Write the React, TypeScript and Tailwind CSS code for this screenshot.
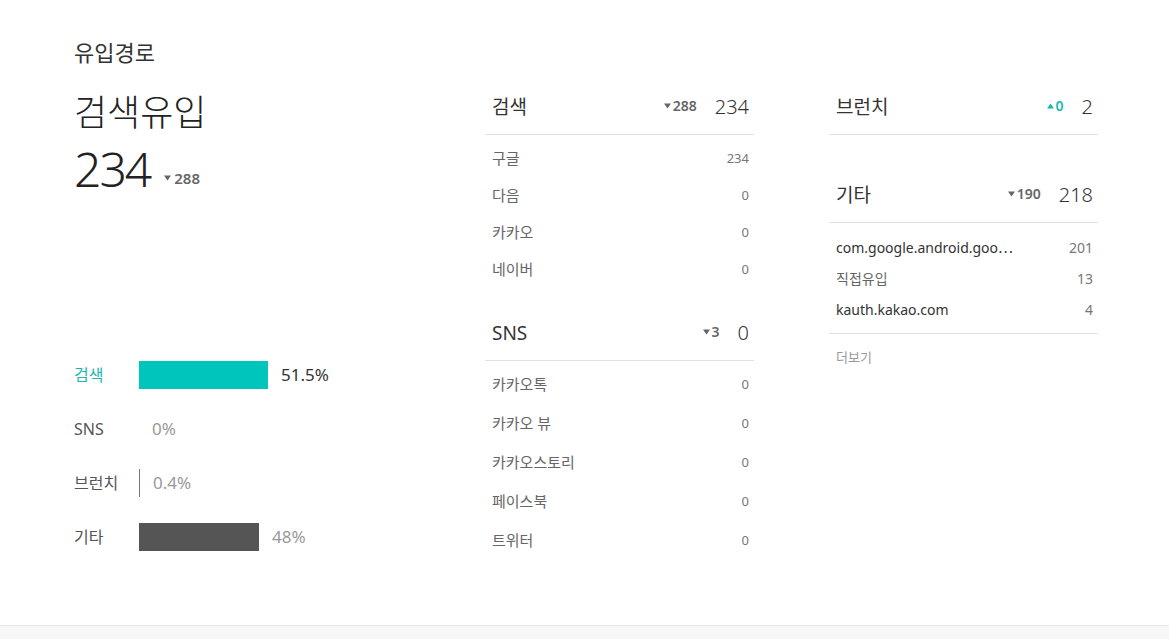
import React from "react";

const font = { fontFamily: '"Noto Sans", "Noto Sans CJK KR", sans-serif' };

function Tri({ up, className }: { up?: boolean; className?: string }) {
  return (
    <svg width="7" height="6" viewBox="0 0 7 6" className={className}>
      {up ? <path d="M3.5 0.5 L7 5.5 L0 5.5 Z" fill="currentColor" /> : <path d="M0 0.5 L7 0.5 L3.5 5.5 Z" fill="currentColor" />}
    </svg>
  );
}

function Header({ title, diff, up, total }: { title: string; diff: string; up?: boolean; total: string }) {
  return (
    <div className="h-[49px] flex items-center pb-[6px] pl-[7px] pr-[5px] border-b border-[#e1e1e1]">
      <span className="text-[19px] text-[#333] flex-1">{title}</span>
      <span className={`flex items-center gap-[2px] text-[14px] font-semibold -mt-[3px] ${up ? "text-[#1cb7ae]" : "text-[#666]"}`}>
        <Tri up={up} />
        {diff}
      </span>
      <span className="text-[20px] text-[#333] ml-[18px] font-light">{total}</span>
    </div>
  );
}

function Row({ label, value, h }: { label: string; value: string; h: string }) {
  return (
    <div className={`flex items-center justify-between pl-[7px] pr-[5px] ${h}`}>
      <span className="text-[15px] text-[#666]">{label}</span>
      <span className="text-[13px] text-[#777]">{value}</span>
    </div>
  );
}

const chart = [
  { label: "검색", pct: "51.5%", w: 129, color: "bg-[#00c5bd]", active: true },
  { label: "SNS", pct: "0%", w: 0, color: "" },
  { label: "브런치", pct: "0.4%", w: 1, color: "bg-[#777]" },
  { label: "기타", pct: "48%", w: 120, color: "bg-[#555]" },
];

export default function App() {
  return (
    <div style={font} className="bg-white">
      <div className="min-h-[626px] border-b border-[#e6e6e6] pt-[37px] pl-[74px]">
        <h2 className="text-[22px] leading-[30px] text-[#333]">유입경로</h2>
        <div className="flex mt-[19px]">
          <div className="w-[411px]">
            <div className="mt-[5px] text-[36px] leading-[44px] text-[#222] font-light">검색유입</div>
            <div className="mt-[6px] flex items-end">
              <span className="text-[48px] leading-[56px] text-[#222] font-light tracking-[-2px]">234</span>
              <span className="ml-[14px] mb-[8px] flex items-center gap-[3px] text-[15px] font-semibold text-[#666]">
                <Tri />
                288
              </span>
            </div>
            <div className="mt-[151px]">
              {chart.map((c) => (
                <div key={c.label} className="h-[54px] flex items-center">
                  <span className={`w-[65px] text-[16px] ${c.active ? "text-[#1cb7ae]" : "text-[#555]"}`}>{c.label}</span>
                  {c.w === 1 ? (
                    <div className="w-px h-[28px] bg-[#777]" />
                  ) : c.w > 0 ? (
                    <div className={`h-[28px] ${c.color}`} style={{ width: c.w }} />
                  ) : null}
                  <span className={`ml-[13px] text-[17px] ${c.active ? "text-[#333]" : "text-[#999]"}`}>{c.pct}</span>
                </div>
              ))}
            </div>
          </div>

          <div className="w-[269px]">
            <Header title="검색" diff="288" total="234" />
            <div className="pt-[5px]">
              {[
                ["구글", "234"],
                ["다음", "0"],
                ["카카오", "0"],
                ["네이버", "0"],
              ].map(([l, v]) => (
                <Row key={l} label={l} value={v} h="h-[37px]" />
              ))}
            </div>
            <div className="mt-[24px]">
              <Header title="SNS" diff="3" total="0" />
            </div>
            <div className="pt-[4px]">
              {[
                ["카카오톡", "0"],
                ["카카오 뷰", "0"],
                ["카카오스토리", "0"],
                ["페이스북", "0"],
                ["트위터", "0"],
              ].map(([l, v]) => (
                <Row key={l} label={l} value={v} h="h-[39px]" />
              ))}
            </div>
          </div>

          <div className="w-[269px] ml-[75px]">
            <Header title="브런치" diff="0" up total="2" />
            <div className="mt-[39px]">
              <Header title="기타" diff="190" total="218" />
            </div>
            <div className="pt-[9px] pb-[8px] border-b border-[#e1e1e1]">
              {[
                ["com.google.android.goo", "201", true, true],
                ["직접유입", "13", false, false],
                ["kauth.kakao.com", "4", true, false],
              ].map(([l, v, dark, cut]) => (
                <div key={l as string} className="h-[31px] flex items-center justify-between pl-[7px] pr-[5px]">
                  <span className={`text-[14px] ${dark ? "text-[#333]" : "text-[#666]"}`}>
                    {l}
                    {cut && <span style={{ fontFamily: '"Noto Sans CJK KR", sans-serif' }}>⋯</span>}
                  </span>
                  <span className="text-[14px] text-[#777]">{v}</span>
                </div>
              ))}
            </div>
            <div className="mt-[13px] pl-[7px] text-[13px] leading-[20px] text-[#999]">더보기</div>
          </div>
        </div>
      </div>
      <div className="h-[13px] bg-[#f7f7f7]" />
    </div>
  );
}
